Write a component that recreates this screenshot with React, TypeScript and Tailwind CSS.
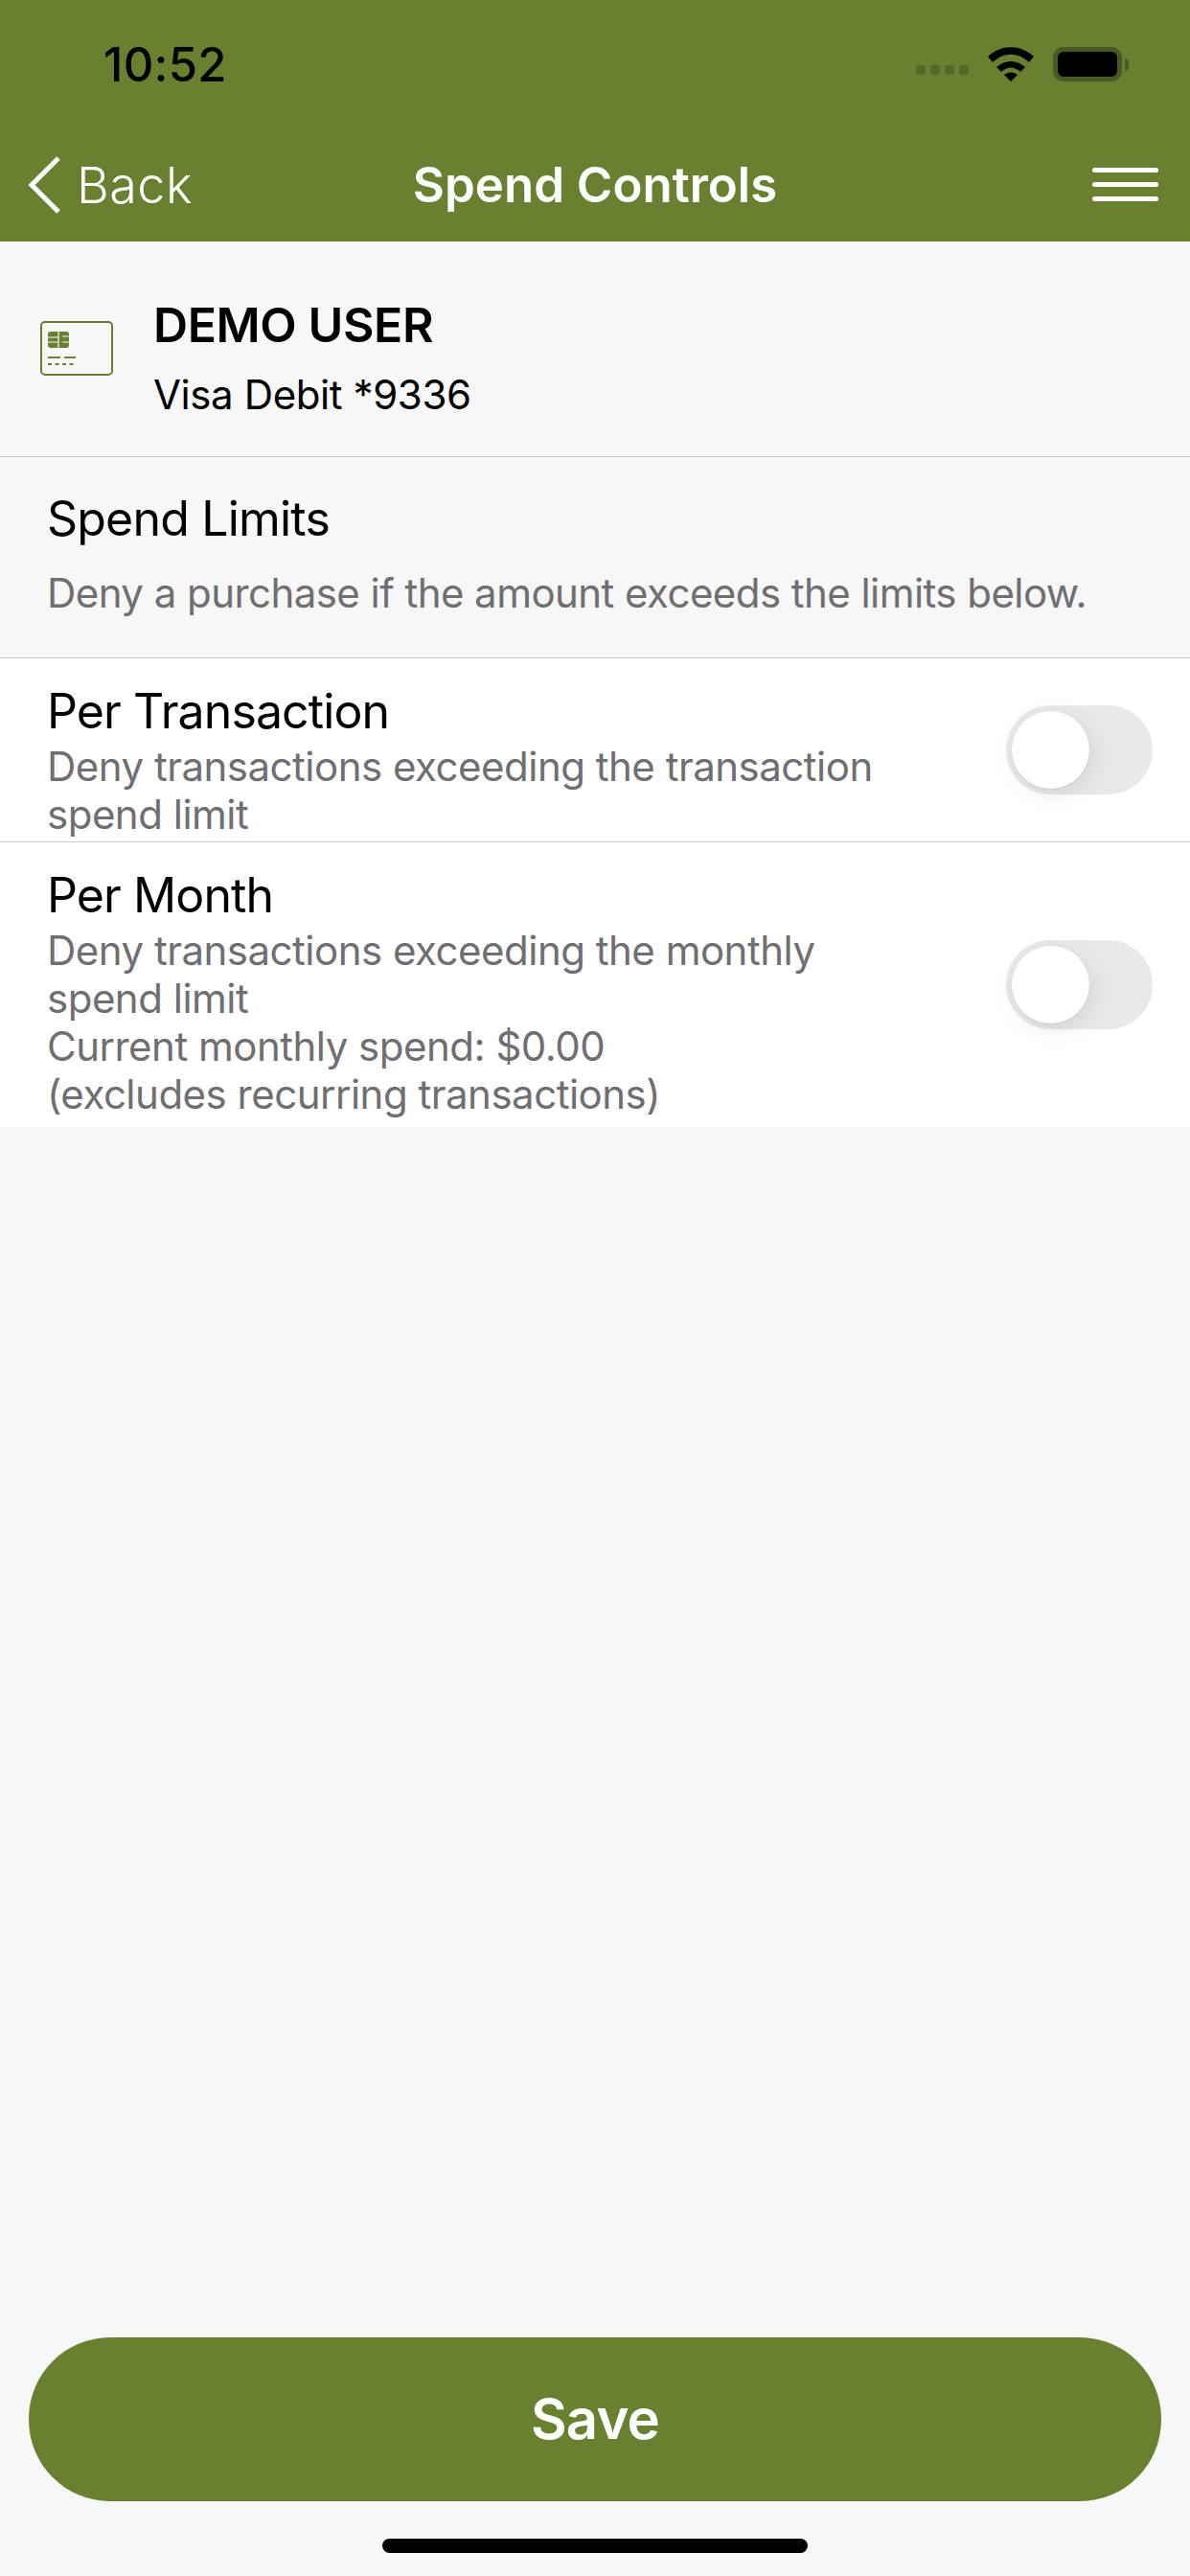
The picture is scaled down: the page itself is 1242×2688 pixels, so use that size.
import React from 'react'

const font = { fontFamily: 'Inter, "Liberation Sans", sans-serif' }

const Toggle = () => (
  <div className="h-[93px] w-[153px] shrink-0 rounded-full bg-[#e9e9ea] p-[6px]">
    <div className="h-[81px] w-[81px] rounded-full bg-white shadow-[4px_6px_24px_rgba(0,0,0,0.09),0_1px_2px_rgba(0,0,0,0.07)]" />
  </div>
)

const StatusBar = () => (
  <div className="flex h-[135px] items-start justify-between pl-[108px] pr-[64px] pt-[42px]">
    <span className="text-[49px] leading-[52px] font-medium tracking-[0.3px] text-black">10:52</span>
    <div className="flex items-start pt-[7px]">
      <div className="mt-[19px] mr-[20px] flex gap-[5px]">
        <div className="h-[10px] w-[10px] rounded-[3px] bg-[#54682a]" />
        <div className="h-[10px] w-[10px] rounded-[3px] bg-[#54682a]" />
        <div className="h-[10px] w-[10px] rounded-[3px] bg-[#54682a]" />
        <div className="h-[10px] w-[10px] rounded-[3px] bg-[#54682a]" />
      </div>
      <svg width="48" height="36" viewBox="0 0 48 36" className="mr-[20px]">
        <path d="M0 10 C14 -3 34 -3 48 10 L43 16 C31 5 17 5 5 16 Z" fill="#000" />
        <path d="M9 21 C18 13 30 13 39 21 L34 26 C27 20 21 20 14 26 Z" fill="#000" />
        <path d="M17 29 C21 25.500 27 25.500 31 29 L24 36 Z" fill="#000" />
      </svg>
      <div className="flex items-center">
        <div className="h-[36px] w-[72px] rounded-[11px] border-[5px] border-[#475a24] bg-black" />
        <div className="ml-[3px] h-[13px] w-[4px] rounded-r-full bg-[#475a24]" />
      </div>
    </div>
  </div>
)

const NavBar = () => (
  <div className="relative flex h-[117px] items-start justify-between pl-[29px] pr-[33px] pt-[27px]">
    <div className="flex items-center">
      <svg width="34" height="60" viewBox="0 0 34 60">
        <path d="M32 2 L4 30 L32 58" fill="none" stroke="#fff" strokeWidth="5" />
      </svg>
      <span className="ml-[17px] mt-[2px] text-[52px] leading-[60px] font-light tracking-[0.5px] text-white">Back</span>
    </div>
    <span className="absolute left-0 right-0 top-[28px] text-center text-[51px] leading-[60px] font-semibold text-white">
      Spend Controls
    </span>
    <div className="mt-[13px] flex w-[69px] flex-col gap-[10px]">
      <div className="h-[5px] rounded-full bg-white" />
      <div className="h-[5px] rounded-full bg-white" />
      <div className="h-[5px] rounded-full bg-white" />
    </div>
  </div>
)

const CardIcon = () => (
  <svg width="76" height="58" viewBox="0 0 76 58" className="shrink-0">
    <rect x="1" y="1" width="74" height="55" rx="4" fill="none" stroke="#698030" strokeWidth="2" />
    <rect x="8" y="11" width="22" height="17" rx="3" fill="#698030" />
    <path d="M19 11 V28 M23 16 H30 M8 17 H19 M8 22 H19 M23 22 H30" stroke="#f7f7f7" strokeWidth="1.200" />
    <path d="M8 38 H21 M25 38 H37" stroke="#698030" strokeWidth="2" />
    <path d="M8 45 H38" stroke="#698030" strokeWidth="2" strokeDasharray="4 3.500" />
  </svg>
)

const Row = ({ title, lines, className }: { title: string; lines: string[]; className: string }) => (
  <div className={`flex items-center justify-between border-[#c8c8cc] bg-white pl-[49px] pr-[39px] ${className}`}>
    <div className="self-start pt-[26px]">
      <div className="text-[50px] leading-[58px] tracking-[-0.9px] text-black">{title}</div>
      <div className="mt-[4px]">
        {lines.map((line, idx) => (
          <div key={idx} className="text-[42px] leading-[50px] tracking-[-0.5px] text-[#6e6e73]">
            {line}
          </div>
        ))}
      </div>
    </div>
    <Toggle />
  </div>
)

export default function App() {
  return (
    <div style={font} className="flex h-[2688px] w-[1242px] flex-col overflow-hidden bg-[#f7f7f7]">
      <header className="h-[252px] shrink-0 bg-[#698030]">
        <StatusBar />
        <NavBar />
      </header>

      <div className="flex h-[225px] items-center border-b border-[#c8c8cc] pl-[42px]">
        <CardIcon />
        <div className="ml-[42px] pt-[18px]">
          <div className="text-[50px] leading-[60px] font-semibold tracking-[-0.4px] text-black">DEMO USER</div>
          <div className="mt-[18px] text-[42px] leading-[50px] tracking-[-0.4px] text-black">Visa Debit *9336</div>
        </div>
      </div>

      <div className="h-[210px] border-b border-[#c8c8cc] pl-[49px] pt-[35px]">
        <div className="text-[50px] leading-[58px] tracking-[-0.8px] text-black">Spend Limits</div>
        <div className="mt-[24px] text-[42px] leading-[50px] tracking-[-0.55px] text-[#6e6e73]">
          Deny a purchase if the amount exceeds the limits below.
        </div>
      </div>

      <Row
        title="Per Transaction"
        lines={['Deny transactions exceeding the transaction', 'spend limit']}
        className="h-[192px] border-b"
      />
      <Row
        title="Per Month"
        lines={[
          'Deny transactions exceeding the monthly',
          'spend limit',
          'Current monthly spend: $0.00',
          '(excludes recurring transactions)',
        ]}
        className="h-[297px]"
      />

      <div className="flex-1" />

      <div className="flex flex-col items-center pb-[24px]">
        <button className="flex h-[171px] w-[1182px] items-center justify-center rounded-[85px] bg-[#698030] text-[58px] font-semibold tracking-[-0.8px] text-white">
          Save
        </button>
        <div className="mt-[39px] h-[15px] w-[444px] rounded-full bg-black" />
      </div>
    </div>
  )
}
